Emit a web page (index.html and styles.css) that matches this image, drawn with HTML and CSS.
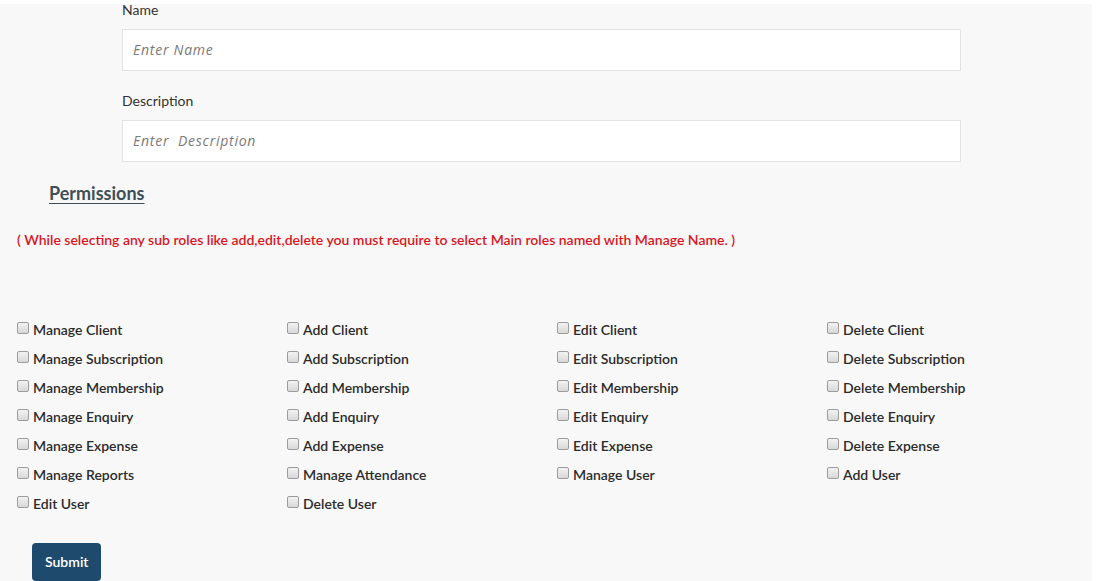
FILE: index.html
```html
<!DOCTYPE html>
<html lang="en">
<head>
<meta charset="utf-8">
<title>Role</title>
<link rel="stylesheet" href="styles.css">
</head>
<body>
<div class="page">
  <form class="role-form">
    <div class="fields">
      <div class="field">
        <label class="field-label" for="name">Name</label>
        <input class="field-input" id="name" type="text" placeholder="Enter Name">
      </div>
      <div class="field">
        <label class="field-label" for="desc">Description</label>
        <input class="field-input" id="desc" type="text" placeholder="Enter  Description">
      </div>
    </div>
    <h3 class="perm-title">Permissions</h3>
    <p class="perm-note">( While selecting any sub roles like add,edit,delete you must require to select Main roles named with Manage Name. )</p>
    <div class="perm-grid">
      <label class="perm"><input type="checkbox" class="cb"><span>Manage Client</span></label>
      <label class="perm"><input type="checkbox" class="cb"><span>Add Client</span></label>
      <label class="perm"><input type="checkbox" class="cb"><span>Edit Client</span></label>
      <label class="perm"><input type="checkbox" class="cb"><span>Delete Client</span></label>
      <label class="perm"><input type="checkbox" class="cb"><span>Manage Subscription</span></label>
      <label class="perm"><input type="checkbox" class="cb"><span>Add Subscription</span></label>
      <label class="perm"><input type="checkbox" class="cb"><span>Edit Subscription</span></label>
      <label class="perm"><input type="checkbox" class="cb"><span>Delete Subscription</span></label>
      <label class="perm"><input type="checkbox" class="cb"><span>Manage Membership</span></label>
      <label class="perm"><input type="checkbox" class="cb"><span>Add Membership</span></label>
      <label class="perm"><input type="checkbox" class="cb"><span>Edit Membership</span></label>
      <label class="perm"><input type="checkbox" class="cb"><span>Delete Membership</span></label>
      <label class="perm"><input type="checkbox" class="cb"><span>Manage Enquiry</span></label>
      <label class="perm"><input type="checkbox" class="cb"><span>Add Enquiry</span></label>
      <label class="perm"><input type="checkbox" class="cb"><span>Edit Enquiry</span></label>
      <label class="perm"><input type="checkbox" class="cb"><span>Delete Enquiry</span></label>
      <label class="perm"><input type="checkbox" class="cb"><span>Manage Expense</span></label>
      <label class="perm"><input type="checkbox" class="cb"><span>Add Expense</span></label>
      <label class="perm"><input type="checkbox" class="cb"><span>Edit Expense</span></label>
      <label class="perm"><input type="checkbox" class="cb"><span>Delete Expense</span></label>
      <label class="perm"><input type="checkbox" class="cb"><span>Manage Reports</span></label>
      <label class="perm"><input type="checkbox" class="cb"><span>Manage Attendance</span></label>
      <label class="perm"><input type="checkbox" class="cb"><span>Manage User</span></label>
      <label class="perm"><input type="checkbox" class="cb"><span>Add User</span></label>
      <label class="perm"><input type="checkbox" class="cb"><span>Edit User</span></label>
      <label class="perm"><input type="checkbox" class="cb"><span>Delete User</span></label>
    </div>
    <div class="actions">
      <button type="button" class="btn-submit">Submit</button>
    </div>
  </form>
</div>
</body>
</html>
```

FILE: styles.css
```css
* { box-sizing: border-box; }
html, body {
  margin: 0;
  padding: 0;
  background: #ffffff;
  height: 100%;
  overflow: hidden;
}
body {
  font-family: Lato, "Liberation Sans", sans-serif;
  color: #333333;
}
.page {
  background: #f8f8f8;
  margin: 4px 4px 0 0;
  min-height: calc(100% - 4px);
}
.role-form {
  display: flex;
  flex-direction: column;
}
.fields {
  padding-left: 122px;
  width: 961px;
  display: flex;
  flex-direction: column;
  gap: 20px;
}
.field {
  display: flex;
  flex-direction: column;
  gap: 9px;
}
.field:first-child { margin-top: -4px; }
.field-label {
  font-size: 14px;
  line-height: 20px;
  color: #333333;
}
.field-input {
  height: 42px;
  width: 100%;
  border: 1px solid #e3e3e3;
  background: #ffffff;
  padding: 0 10px 1px 10px;
  font-family: "Open Sans", sans-serif;
  font-size: 14px;
  outline: none;
}
.field-input::placeholder {
  color: #7a7a7a;
  font-style: italic;
  letter-spacing: 0.75px;
}
.perm-title {
  margin: 19px 0 0 49px;
  font-size: 18px;
  line-height: 24px;
  font-weight: 700;
  color: #3e4f58;
  text-decoration: underline;
  text-underline-offset: 3px;
}
.perm-note {
  margin: 25px 0 0 17px;
  font-size: 14px;
  line-height: 20px;
  font-weight: 600;
  color: #d9161f;
}
.perm-grid {
  margin: 65px 0 0 17px;
  display: grid;
  grid-template-columns: repeat(4, 270px);
  grid-auto-rows: 29px;
}
.perm {
  display: flex;
  align-items: center;
  gap: 4px;
  font-size: 14px;
  font-weight: 600;
  color: #2b2b2b;
}
.cb {
  appearance: none;
  -webkit-appearance: none;
  margin: -3px 0 0 0;
  width: 12px;
  height: 12px;
  border: 1px solid #9c9c9c;
  border-radius: 2px;
  background: linear-gradient(#f2f2f2, #d8d8d8);
  flex: none;
}
.actions {
  margin: 25px 0 0 32px;
}
.btn-submit {
  background: #1e4a6d;
  color: #ffffff;
  border: none;
  border-radius: 4px;
  font-family: Lato, "Liberation Sans", sans-serif;
  font-size: 14px;
  font-weight: 600;
  line-height: 20px;
  padding: 9px 13px 9px 13px;
  width: 69px;
  height: 38px;
}
```
